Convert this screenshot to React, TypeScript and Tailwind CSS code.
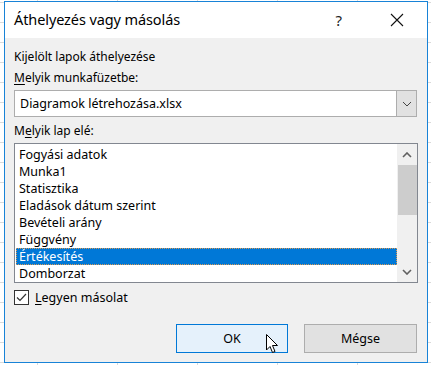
import React from "react";

const items = [
  "Fogyási adatok",
  "Munka1",
  "Statisztika",
  "Eladások dátum szerint",
  "Bevételi arány",
  "Függvény",
  "Értékesítés",
  "Domborzat",
];

export default function App() {
  const font = { fontFamily: '"Noto Sans", "Open Sans", sans-serif' };
  return (
    <div
      className="w-[431px] h-[365px] overflow-hidden bg-white bg-[linear-gradient(to_bottom,#dadada_1px,transparent_1px),linear-gradient(to_right,#dadada_1px,transparent_1px)] bg-[length:80px_20px] bg-[position:37px_2px] pt-[1px] pl-[4px] relative"
      style={font}
    >
      <div className="w-[424px] h-[362px] border border-[#1883d7] bg-[#f0f0f0] flex flex-col text-[#000]">
        {/* title bar */}
        <div className="h-[36px] bg-white flex items-center pl-[9px] shrink-0">
          <span className="text-[14.5px] tracking-[-0.1px] text-black">Áthelyezés vagy másolás</span>
          <span className="ml-auto mr-[48px] text-[15px] text-[#222]">?</span>
          <svg width="14" height="14" viewBox="0 0 14 14" className="mr-[23px]">
            <path d="M1 1 L13 13 M13 1 L1 13" stroke="#111" strokeWidth="1.1" />
          </svg>
        </div>
        {/* body */}
        <div className="flex flex-col px-[9px] text-[12px] leading-[17px]">
          <div className="mt-[10px]">Kijelölt lapok áthelyezése</div>
          <div className="mt-[4px]">
            <span className="underline underline-offset-2">M</span>elyik munkafüzetbe:
          </div>
          <div className="mt-[4px] h-[27px] w-[403px] border border-[#adadad] bg-white flex">
            <div className="flex-1 flex items-center pl-[5px] text-[12.5px]">Diagramok létrehozása.xlsx</div>
            <div className="w-[21px] -my-px -mr-px border border-[#adadad] bg-[#e1e1e1] flex items-center justify-center">
              <svg width="10" height="6" viewBox="0 0 10 6">
                <path d="M1 1 L5 5 L9 1" stroke="#444" strokeWidth="1" fill="none" />
              </svg>
            </div>
          </div>
          <div className="mt-[5px]">
            M<span className="underline underline-offset-2">e</span>lyik lap elé:
          </div>
          <div className="mt-[4px] h-[140px] w-[404px] border border-[#828790] bg-white flex">
            <div className="flex-1 pt-[2px] pl-[1px] pr-[0px]">
              {items.map((it) => (
                <div
                  key={it}
                  className={
                    "h-[17px] pl-[3px] text-[12.5px] leading-[17px] flex items-center " +
                    (it === "Értékesítés"
                      ? "bg-[#0078d7] text-white outline outline-1 outline-dotted outline-[#d99a55] -outline-offset-1"
                      : "")
                  }
                >
                  {it}
                </div>
              ))}
            </div>
            <div className="w-[20px] bg-[#f0f0f0] flex flex-col items-center">
              <div className="h-[21px] flex items-center justify-center">
                <svg width="10" height="6" viewBox="0 0 10 6">
                  <path d="M1 5 L5 1 L9 5" stroke="#606060" strokeWidth="1.6" fill="none" />
                </svg>
              </div>
              <div className="w-[19px] h-[50px] bg-[#cdcdcd]" />
              <div className="flex-1" />
              <div className="h-[21px] flex items-center justify-center">
                <svg width="10" height="6" viewBox="0 0 10 6">
                  <path d="M1 1 L5 5 L9 1" stroke="#606060" strokeWidth="1.6" fill="none" />
                </svg>
              </div>
            </div>
          </div>
          <div className="mt-[6px] flex items-center">
            <div className="w-[15px] h-[15px] border border-[#333] bg-white flex items-center justify-center">
              <svg width="11" height="9" viewBox="0 0 11 9">
                <path d="M1 4.5 L4 7.5 L10 1" stroke="#333" strokeWidth="1.2" fill="none" />
              </svg>
            </div>
            <span className="ml-[6px] text-[12.5px]">
              <span className="underline underline-offset-2">L</span>egyen másolat
            </span>
          </div>
          <div className="mt-[18px] flex justify-end gap-[16px] pr-[1px]">
            <div className="w-[112px] h-[29px] border border-[#0078d7] bg-[#e5f1fb] flex items-center justify-center text-[12.5px]">
              OK
            </div>
            <div className="w-[113px] h-[29px] border border-[#adadad] bg-[#e1e1e1] flex items-center justify-center text-[12.5px]">
              Mégse
            </div>
          </div>
        </div>
      </div>
      {/* mouse cursor */}
      <svg className="absolute left-[266px] top-[334px]" width="13" height="20" viewBox="0 0 13 20">
        <path
          d="M0.5 0.5 L0.5 16 L4 12.5 L6.5 18.5 L9 17.5 L6.5 11.5 L11.5 11.5 Z"
          fill="white"
          stroke="black"
          strokeWidth="1"
          strokeLinejoin="miter"
        />
      </svg>
    </div>
  );
}
